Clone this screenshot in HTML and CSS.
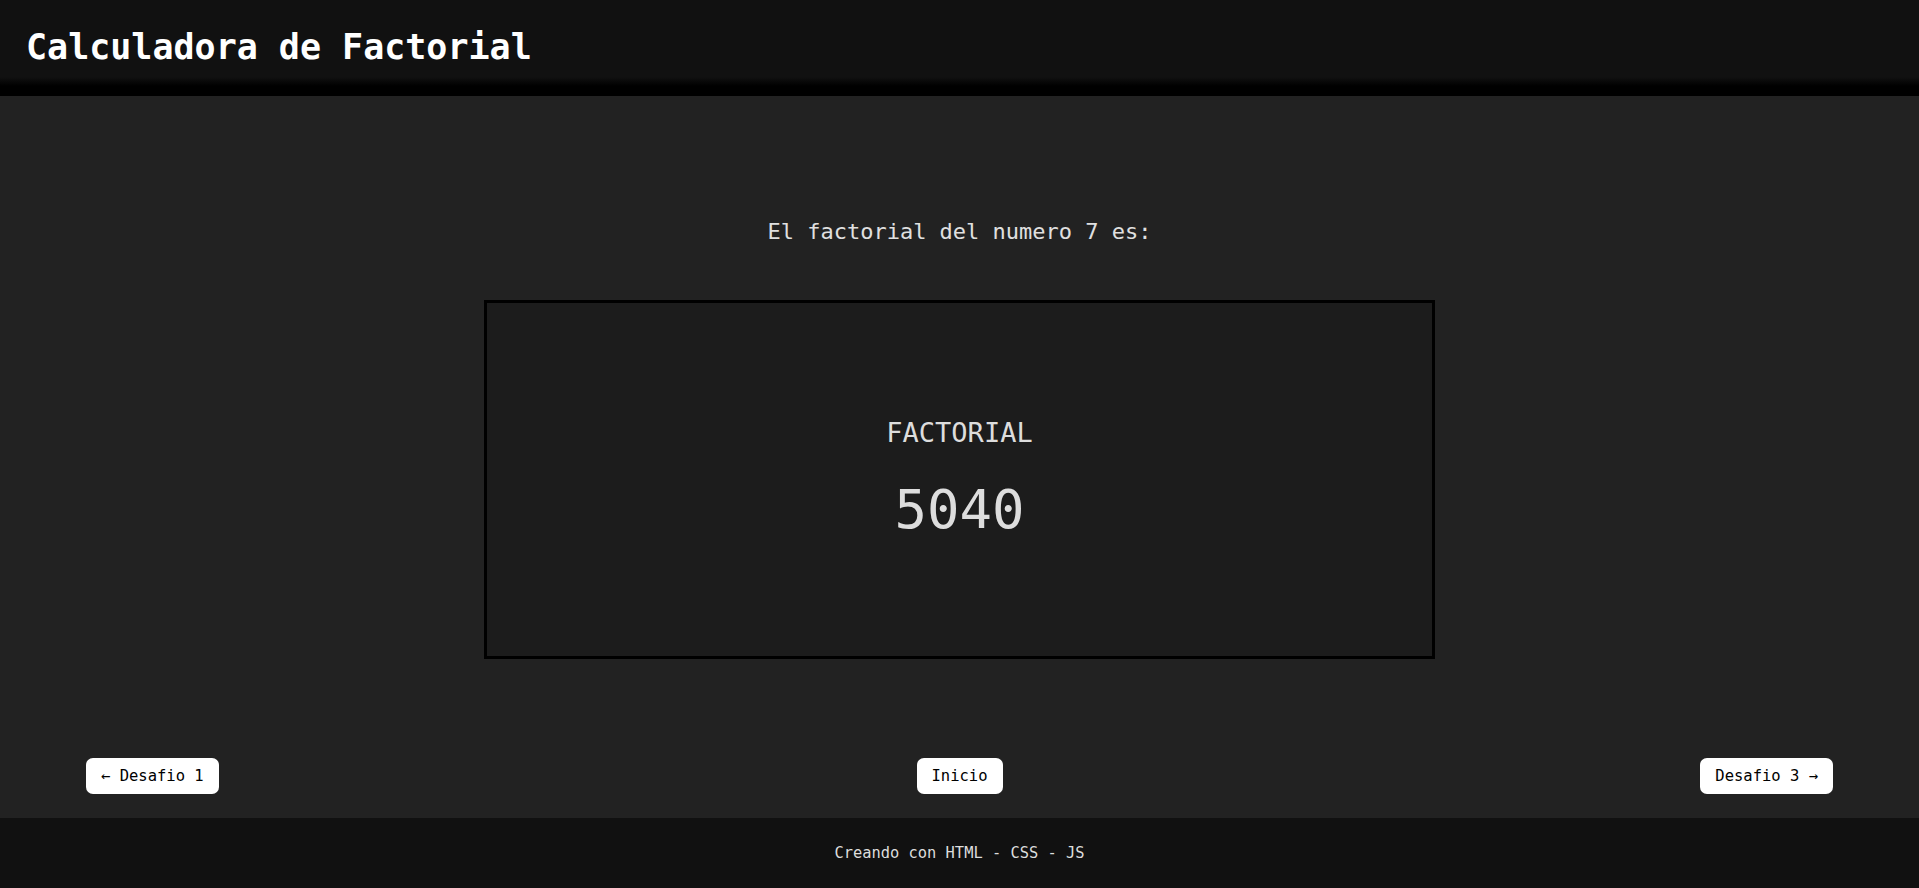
FILE: index.html
```html
<!DOCTYPE html>
<html lang="es">
<head>
<meta charset="utf-8">
<title>Calculadora de Factorial</title>
<link rel="stylesheet" href="styles.css">
</head>
<body>
<header class="topbar">
  <h1 class="title">Calculadora de Factorial</h1>
</header>
<main class="content">
  <p class="subtitle">El factorial del numero 7 es:</p>
  <section class="result">
    <h2 class="result-label">FACTORIAL</h2>
    <p class="result-value">5040</p>
  </section>
  <nav class="nav-row">
    <a class="nav-btn" href="#">← Desafio 1</a>
    <a class="nav-btn" href="#">Inicio</a>
    <a class="nav-btn" href="#">Desafio 3 →</a>
  </nav>
</main>
<footer class="footer">
  <p class="footer-text">Creando con HTML - CSS - JS</p>
</footer>
</body>
</html>
```

FILE: styles.css
```css
* { box-sizing: border-box; }
html, body { margin: 0; padding: 0; }
body {
  height: 888px;
  display: flex;
  flex-direction: column;
  background: #222222;
  color: #dddddd;
  font-family: "DejaVu Sans Mono", "Liberation Mono", monospace;
  overflow: hidden;
}
.topbar {
  height: 96px;
  flex: none;
  background: linear-gradient(to bottom, #111111 0, #111111 77px, #000000 86px, #000000 96px);
  display: flex;
  align-items: flex-start;
  padding: 26px 0 0 26px;
}
.title {
  margin: 0;
  font-size: 35px;
  line-height: 42px;
  font-weight: bold;
  color: #ffffff;
}
.content {
  flex: 1;
  display: flex;
  flex-direction: column;
  align-items: center;
}
.subtitle {
  margin: 121px 0 0;
  font-size: 22px;
  line-height: 30px;
  color: #e0e0e0;
}
.result {
  margin-top: 53px;
  width: 951px;
  height: 359px;
  border: 3px solid #000000;
  background: #1c1c1c;
  display: flex;
  flex-direction: column;
  align-items: center;
  padding-top: 114px;
}
.result-label {
  margin: 0;
  font-size: 27px;
  line-height: 32px;
  font-weight: normal;
  color: #dddddd;
}
.result-value {
  margin: 31px 0 0;
  font-size: 54px;
  line-height: 60px;
  color: #dddddd;
}
.nav-row {
  margin-top: auto;
  margin-bottom: 24px;
  width: 100%;
  padding: 0 86px;
  display: flex;
  justify-content: space-between;
  align-items: center;
}
.nav-btn {
  display: block;
  height: 36px;
  line-height: 36px;
  padding: 0 15px;
  background: #ffffff;
  color: #000000;
  border-radius: 7px;
  font-size: 15.5px;
  text-decoration: none;
}
.footer {
  height: 70px;
  flex: none;
  background: #111111;
  display: flex;
  align-items: center;
  justify-content: center;
}
.footer-text {
  margin: 0;
  font-size: 15.4px;
  color: #dddddd;
}
```
